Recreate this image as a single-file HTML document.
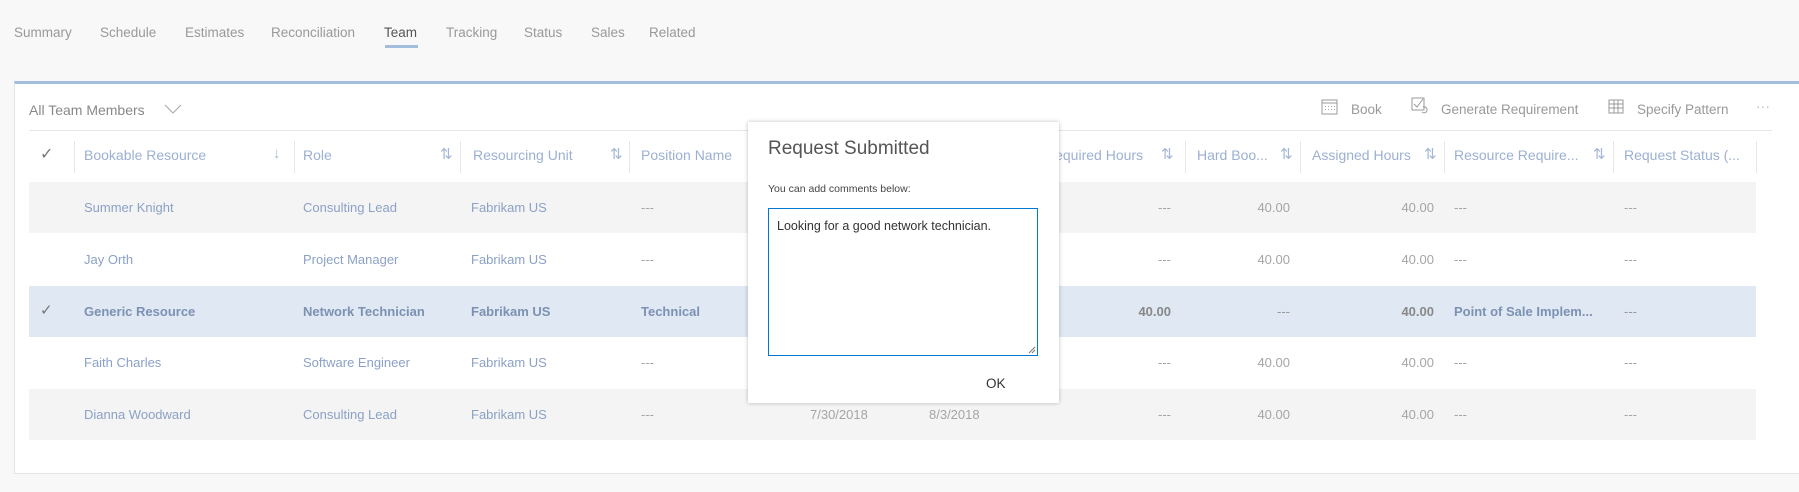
<!DOCTYPE html>
<html><head><meta charset="utf-8"><style>
*{box-sizing:border-box;margin:0;padding:0}
body{width:1799px;height:492px;background:#f8f8f8;font-family:"Liberation Sans",sans-serif;position:relative;overflow:hidden;color:#777}
.a{position:absolute;white-space:nowrap}
.tab{top:25px;font-size:13.5px;color:#999}
.panel{position:absolute;left:14px;top:81px;width:1790px;height:393px;background:#fff;border-top:3px solid #a3bedd;border-left:1px solid #e4e4e4;border-bottom:1px solid #e4e4e4}
.hd{top:147px;font-size:14px;color:#9cb0d2}
.ar{top:145px;font-size:15px;color:#a5b8d6}
.sep{position:absolute;top:141px;width:1px;height:32px;background:#e6e6e6}
.row{position:absolute;left:29px;width:1727px;height:51px}
.c{position:absolute;top:18px;font-size:13px;color:#8ba1c6;white-space:nowrap}
.g{color:#a5a5a5}
.r{text-align:right}
.sel .c{font-weight:bold;color:#7d91b3}
.sel .g{color:#888}
.sel .n{font-weight:normal;color:#999}
</style></head><body>
<div class="a tab" style="left:14px">Summary</div>
<div class="a tab" style="left:100px">Schedule</div>
<div class="a tab" style="left:185px">Estimates</div>
<div class="a tab" style="left:271px">Reconciliation</div>
<div class="a tab" style="left:384px;color:#555">Team</div>
<div class="a" style="left:385px;top:45px;width:33px;height:3px;background:#a3bedd"></div>
<div class="a tab" style="left:446px">Tracking</div>
<div class="a tab" style="left:524px">Status</div>
<div class="a tab" style="left:591px">Sales</div>
<div class="a tab" style="left:649px">Related</div>

<div class="panel"></div>
<div class="a" style="left:29px;top:102px;font-size:14px;color:#888">All Team Members</div>
<svg class="a" style="left:164px;top:103px" width="18" height="12"><path d="M1 2l8 8 8-8" fill="none" stroke="#aaa" stroke-width="1.1"/></svg>

<svg class="a" style="left:1321px;top:98px" width="17" height="17"><rect x="1" y="2" width="15" height="14" fill="none" stroke="#999"/><line x1="1" y1="5" x2="16" y2="5" stroke="#999"/><g fill="#aaa"><rect x="4" y="8" width="1" height="1"/><rect x="7" y="8" width="1" height="1"/><rect x="10" y="8" width="1" height="1"/><rect x="13" y="8" width="1" height="1"/><rect x="4" y="11" width="1" height="1"/><rect x="7" y="11" width="1" height="1"/><rect x="10" y="11" width="1" height="1"/><rect x="13" y="11" width="1" height="1"/></g></svg>
<div class="a" style="left:1351px;top:102px;font-size:13.5px;color:#999">Book</div>
<svg class="a" style="left:1411px;top:97px" width="18" height="18"><rect x="1" y="1" width="12" height="12" fill="none" stroke="#999"/><path d="M3 7l3 3 6-8" fill="none" stroke="#999"/><path d="M11 15a3 3 0 1 0 1-5" fill="none" stroke="#999"/></svg>
<div class="a" style="left:1441px;top:102px;font-size:13.5px;color:#999">Generate Requirement</div>
<svg class="a" style="left:1608px;top:99px" width="16" height="15"><rect x="1" y="1" width="14" height="13" fill="none" stroke="#999"/><line x1="1" y1="5" x2="15" y2="5" stroke="#999"/><line x1="1" y1="9" x2="15" y2="9" stroke="#999"/><line x1="6" y1="1" x2="6" y2="14" stroke="#999"/><line x1="10" y1="1" x2="10" y2="14" stroke="#999"/></svg>
<div class="a" style="left:1637px;top:102px;font-size:13.5px;color:#999">Specify Pattern</div>
<div class="a" style="left:1756px;top:98px;font-size:14px;color:#bbb">···</div>
<div class="a" style="left:29px;top:130px;width:1743px;height:1px;background:#e6e6e6"></div>

<div class="a" style="left:40px;top:144px;font-size:16px;color:#777">✓</div>
<div class="sep" style="left:74px"></div>
<div class="a hd" style="left:84px">Bookable Resource</div><div class="a ar" style="left:273px">↓</div>
<div class="sep" style="left:294px"></div>
<div class="a hd" style="left:303px">Role</div><div class="a ar" style="left:440px">⇅</div>
<div class="sep" style="left:460px"></div>
<div class="a hd" style="left:473px">Resourcing Unit</div><div class="a ar" style="left:610px">⇅</div>
<div class="sep" style="left:629px"></div>
<div class="a hd" style="left:641px">Position Name</div>
<div class="a hd" style="left:1045px">Required Hours</div><div class="a ar" style="left:1161px">⇅</div>
<div class="sep" style="left:1185px"></div>
<div class="a hd" style="left:1197px">Hard Boo...</div><div class="a ar" style="left:1280px">⇅</div>
<div class="sep" style="left:1300px"></div>
<div class="a hd" style="left:1312px">Assigned Hours</div><div class="a ar" style="left:1424px">⇅</div>
<div class="sep" style="left:1444px"></div>
<div class="a hd" style="left:1454px">Resource Require...</div><div class="a ar" style="left:1593px">⇅</div>
<div class="sep" style="left:1613px"></div>
<div class="a hd" style="left:1624px">Request Status (...</div>
<div class="sep" style="left:1756px"></div>

<div class="row" style="top:182px;background:#f4f4f4">
<div class="c" style="left:55px">Summer Knight</div><div class="c" style="left:274px">Consulting Lead</div><div class="c" style="left:442px">Fabrikam US</div><div class="c g" style="left:612px">---</div>
<div class="c g r" style="left:1042px;width:100px">---</div><div class="c g r" style="left:1161px;width:100px">40.00</div><div class="c g r" style="left:1305px;width:100px">40.00</div><div class="c g" style="left:1425px">---</div><div class="c g" style="left:1595px">---</div></div>
<div class="row" style="top:234px">
<div class="c" style="left:55px">Jay Orth</div><div class="c" style="left:274px">Project Manager</div><div class="c" style="left:442px">Fabrikam US</div><div class="c g" style="left:612px">---</div>
<div class="c g r" style="left:1042px;width:100px">---</div><div class="c g r" style="left:1161px;width:100px">40.00</div><div class="c g r" style="left:1305px;width:100px">40.00</div><div class="c g" style="left:1425px">---</div><div class="c g" style="left:1595px">---</div></div>
<div class="row sel" style="top:286px;background:#dfe8f3">
<div class="a" style="left:11px;top:15px;font-size:15px;color:#777">✓</div>
<div class="c" style="left:55px">Generic Resource</div><div class="c" style="left:274px">Network Technician</div><div class="c" style="left:442px">Fabrikam US</div><div class="c" style="left:612px">Technical</div>
<div class="c g r" style="left:1042px;width:100px">40.00</div><div class="c g r n" style="left:1161px;width:100px">---</div><div class="c g r" style="left:1305px;width:100px">40.00</div><div class="c" style="left:1425px">Point of Sale Implem...</div><div class="c g n" style="left:1595px">---</div></div>
<div class="row" style="top:337px">
<div class="c" style="left:55px">Faith Charles</div><div class="c" style="left:274px">Software Engineer</div><div class="c" style="left:442px">Fabrikam US</div><div class="c g" style="left:612px">---</div>
<div class="c g r" style="left:1042px;width:100px">---</div><div class="c g r" style="left:1161px;width:100px">40.00</div><div class="c g r" style="left:1305px;width:100px">40.00</div><div class="c g" style="left:1425px">---</div><div class="c g" style="left:1595px">---</div></div>
<div class="row" style="top:389px;background:#f4f4f4">
<div class="c" style="left:55px">Dianna Woodward</div><div class="c" style="left:274px">Consulting Lead</div><div class="c" style="left:442px">Fabrikam US</div><div class="c g" style="left:612px">---</div>
<div class="c g" style="left:781px">7/30/2018</div><div class="c g" style="left:900px">8/3/2018</div>
<div class="c g r" style="left:1042px;width:100px">---</div><div class="c g r" style="left:1161px;width:100px">40.00</div><div class="c g r" style="left:1305px;width:100px">40.00</div><div class="c g" style="left:1425px">---</div><div class="c g" style="left:1595px">---</div></div>

<div class="a" style="left:748px;top:122px;width:311px;height:281px;background:#fff;box-shadow:0 0 4px rgba(0,0,0,.25)">
<div class="a" style="left:20px;top:16px;font-size:19px;color:#555">Request Submitted</div>
<div class="a" style="left:20px;top:61px;font-size:10.5px;color:#444">You can add comments below:</div>
<div class="a" style="left:20px;top:86px;width:270px;height:148px;border:1.5px solid #0078d4">
<div class="a" style="left:8px;top:10px;font-size:12.5px;color:#333">Looking for a good network technician.</div>
<svg class="a" style="right:1px;bottom:1px" width="8" height="8"><path d="M7 1L1 7M7 4L4 7" stroke="#777"/></svg></div>
<div class="a" style="left:238px;top:254px;font-size:13.5px;color:#333">OK</div>
</div>
</body></html>
